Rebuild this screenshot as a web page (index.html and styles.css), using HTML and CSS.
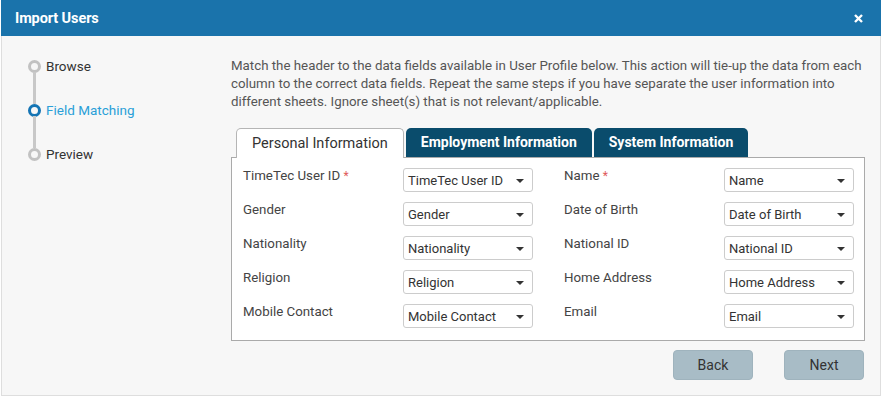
FILE: index.html
```html
<!DOCTYPE html>
<html>
<head>
<meta charset="utf-8">
<title>Import Users</title>
<link rel="stylesheet" href="styles.css">
</head>
<body>
<div class="dialog">
  <div class="dialog-header">
    <span class="dialog-title">Import Users</span>
    <span class="close" aria-label="Close">
      <svg width="9" height="9" viewBox="0 0 9 9"><path d="M1 1 L8 8 M8 1 L1 8" stroke="#fff" stroke-width="2.4" stroke-linecap="butt"/></svg>
    </span>
  </div>
  <div class="dialog-body">
    <aside class="steps">
      <div class="step"><span class="dot"></span><span class="step-label">Browse</span></div>
      <div class="connector"></div>
      <div class="step active"><span class="dot"></span><span class="step-label">Field Matching</span></div>
      <div class="connector"></div>
      <div class="step"><span class="dot"></span><span class="step-label">Preview</span></div>
    </aside>
    <main class="content">
      <p class="intro">Match the header to the data fields available in User Profile below. This action will tie-up the data from each column to the correct data fields. Repeat the same steps if you have separate the user information into different sheets. Ignore sheet(s) that is not relevant/applicable.</p>
      <div class="tabs">
        <div class="tab active">Personal Information</div>
        <div class="tab">Employment Information</div>
        <div class="tab">System Information</div>
      </div>
      <div class="panel">
        <div class="field"><span class="label">TimeTec User ID <span class="req">*</span></span><div class="select"><span>TimeTec User ID</span><i class="caret"></i></div></div>
        <div class="field"><span class="label">Name <span class="req">*</span></span><div class="select"><span>Name</span><i class="caret"></i></div></div>
        <div class="field"><span class="label">Gender</span><div class="select"><span>Gender</span><i class="caret"></i></div></div>
        <div class="field"><span class="label">Date of Birth</span><div class="select"><span>Date of Birth</span><i class="caret"></i></div></div>
        <div class="field"><span class="label">Nationality</span><div class="select"><span>Nationality</span><i class="caret"></i></div></div>
        <div class="field"><span class="label">National ID</span><div class="select"><span>National ID</span><i class="caret"></i></div></div>
        <div class="field"><span class="label">Religion</span><div class="select"><span>Religion</span><i class="caret"></i></div></div>
        <div class="field"><span class="label">Home Address</span><div class="select"><span>Home Address</span><i class="caret"></i></div></div>
        <div class="field"><span class="label">Mobile Contact</span><div class="select"><span>Mobile Contact</span><i class="caret"></i></div></div>
        <div class="field"><span class="label">Email</span><div class="select"><span>Email</span><i class="caret"></i></div></div>
      </div>
      <div class="actions">
        <button class="btn">Back</button>
        <button class="btn">Next</button>
      </div>
    </main>
  </div>
</div>
</body>
</html>
```
FILE: styles.css
```css
* { box-sizing: border-box; }
html, body { margin: 0; padding: 0; background: #fff; }
body {
  font-family: Roboto, "Liberation Sans", sans-serif;
  font-size: 13.3px;
  color: #333;
}
.dialog {
  width: 880px;
  height: 396px;
  margin-left: 1px;
  background: #f7f7f7;
  border: 1px solid #dedede;
  border-top: none;
  display: flex;
  flex-direction: column;
}
.dialog-header {
  height: 36px;
  margin: 0 -1px;
  background: #1a73ab;
  display: flex;
  align-items: center;
  justify-content: space-between;
  padding: 0 18px 0 14px;
  flex: none;
}
.dialog-title {
  color: #fff;
  font-weight: 700;
  font-size: 14.5px;
  letter-spacing: -0.1px;
}
.close { display: flex; align-items: center; }
.dialog-body {
  flex: 1;
  display: flex;
  min-width: 0;
}
.steps {
  flex: none;
  width: 229px;
  padding: 24px 0 0 26px;
  display: flex;
  flex-direction: column;
}
.step {
  display: flex;
  align-items: center;
  height: 12px;
}
.dot {
  width: 13px;
  height: 13px;
  border-radius: 50%;
  border: 3px solid #c2c2c2;
  background: #f7f7f7;
  flex: none;
}
.step.active .dot { border-color: #1474b4; }
.step-label {
  margin-left: 5px;
  font-size: 13.5px;
  color: #333;
  white-space: nowrap;
}
.step.active .step-label { color: #2a9fd8; }
.connector {
  width: 3px;
  height: 32px;
  margin-left: 5px;
  background: #c8c8c8;
}
.content {
  flex: 1;
  min-width: 0;
  padding: 21px 15px 0 0;
}
.intro {
  margin: 0;
  line-height: 18px;
  color: #555;
  font-size: 13.3px;
}
.tabs {
  display: flex;
  gap: 2px;
  margin: 17px 0 0 5px;
  height: 29px;
  align-items: flex-end;
}
.tab {
  height: 29px;
  line-height: 29px;
  padding: 0 15px;
  border-radius: 5px 5px 0 0;
  background: #0a4c6c;
  color: #fff;
  font-weight: 700;
  font-size: 14px;
  white-space: nowrap;
}
.tab.active {
  background: #fff;
  color: #333;
  font-weight: 400;
  font-size: 14.5px;
  padding: 0 15px;
  height: 30px;
  border: 1px solid #b5b5b5;
  border-bottom: none;
  margin-bottom: -1px;
  position: relative;
  z-index: 1;
}
.panel {
  background: #fff;
  border: 1px solid #aaa;
  height: 184px;
  padding: 10px 11px 0 11px;
  display: grid;
  grid-template-columns: 290px 290px;
  column-gap: 31px;
  row-gap: 10px;
  align-content: start;
}
.field {
  display: flex;
  align-items: flex-start;
  height: 24px;
}
.label {
  width: 160px;
  flex: none;
  line-height: 18px;
  margin-top: -1px;
  color: #444;
}
.req { color: #e05a5a; font-size: 12px; }
.select {
  width: 130px;
  height: 24px;
  border: 1px solid #ccc;
  border-radius: 3px;
  background: #fff;
  display: flex;
  align-items: center;
  justify-content: space-between;
  padding: 0 8px 0 4px;
  color: #333;
  font-size: 13px;
}
.caret {
  width: 0;
  height: 0;
  border-left: 4px solid transparent;
  border-right: 4px solid transparent;
  border-top: 4px solid #333;
  margin-top: 1px;
}
.actions {
  display: flex;
  justify-content: flex-end;
  gap: 31px;
  margin-top: 9px;
  padding-right: 1px;
}
.btn {
  width: 80px;
  height: 30px;
  border: 1px solid #9fb3bd;
  border-radius: 4px;
  background: #a8bcc6;
  color: #333;
  font-family: Roboto, "Liberation Sans", sans-serif;
  font-size: 14px;
  padding: 0;
}
```
